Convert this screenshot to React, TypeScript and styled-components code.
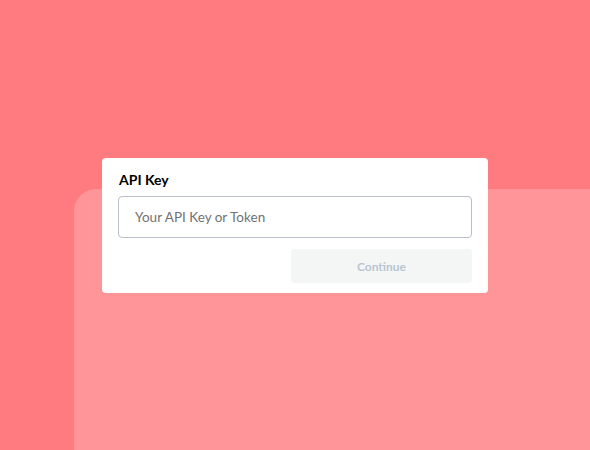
import React from 'react';
import styled, { createGlobalStyle } from 'styled-components';

const GlobalStyle = createGlobalStyle`
  html, body {
    margin: 0;
    padding: 0;
    height: 100%;
  }
  body {
    font-family: Lato, 'Noto Sans', sans-serif;
    background: #ff7b80;
  }
  #root {
    height: 100%;
  }
`;

const Page = styled.div`
  display: grid;
  grid-template: 1fr / 1fr;
  height: 100vh;
  overflow: hidden;
  background: #ff7b80;
`;

const Backdrop = styled.div`
  grid-area: 1 / 1;
  margin: 189px 0 0 74px;
  background: #ff9598;
  border-top-left-radius: 22px;
`;

const Card = styled.div`
  grid-area: 1 / 1;
  align-self: start;
  justify-self: start;
  margin: 158px 0 0 102px;
  width: 386px;
  box-sizing: border-box;
  padding: 12px 16px 10px;
  background: #fff;
  border-radius: 4px;
  display: flex;
  flex-direction: column;
`;

const Label = styled.label`
  padding-left: 1px;
  font-size: 14px;
  line-height: 20px;
  font-weight: 700;
  color: #000;
`;

const Input = styled.input`
  margin-top: 6px;
  height: 42px;
  box-sizing: border-box;
  padding: 0 16px;
  border: 1px solid #b9bdcc;
  border-radius: 4px;
  font-family: inherit;
  font-size: 13.5px;
  color: #222;
  outline: none;

  &::placeholder {
    color: #727272;
  }
`;

const Actions = styled.div`
  display: flex;
  justify-content: flex-end;
  margin-top: 11px;
`;

const Button = styled.button<{ $disabled?: boolean }>`
  width: 181px;
  height: 34px;
  border: none;
  border-radius: 4px;
  background: ${(p) => (p.$disabled ? '#f4f6f6' : '#3e8ef7')};
  color: ${(p) => (p.$disabled ? '#b9c5d0' : '#fff')};
  font-family: inherit;
  font-size: 12px;
  font-weight: 700;
  cursor: ${(p) => (p.$disabled ? 'default' : 'pointer')};
`;

export default function App() {
  return (
    <>
      <GlobalStyle />
      <Page>
        <Backdrop />
        <Card>
          <Label htmlFor="api-key">API Key</Label>
          <Input id="api-key" placeholder="Your API Key or Token" />
          <Actions>
            <Button $disabled>Continue</Button>
          </Actions>
        </Card>
      </Page>
    </>
  );
}
